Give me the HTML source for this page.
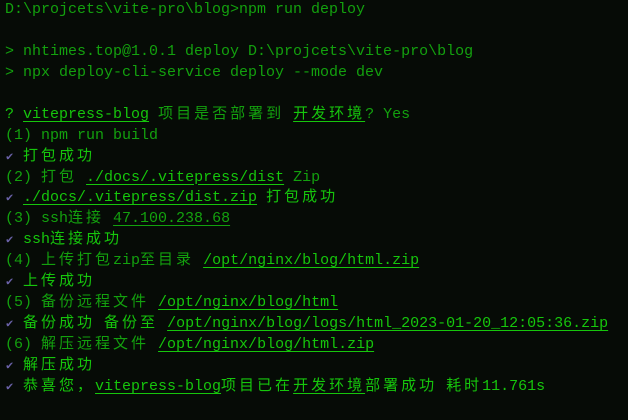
<!DOCTYPE html>
<html><head><meta charset="utf-8"><style>
html,body{margin:0;padding:0;background:#060b06;width:628px;height:420px;overflow:hidden}
.t{position:absolute;left:5px;top:0px;font-family:"Liberation Mono","Noto Sans CJK SC",monospace;font-size:15px;color:#13a10e}
.l{height:20.95px;line-height:20.95px;white-space:pre}
.b{color:#16c60c}
u{text-decoration:underline;text-underline-offset:3px}
.c{letter-spacing:3px}
.k{color:#6a62a8;font-size:12px;display:inline-block;width:18px;padding-left:1px;box-sizing:border-box}
</style></head><body><div class="t"><div class="l">D:\projcets\vite-pro\blog&gt;npm run deploy</div><div class="l"> </div><div class="l">&gt; nhtimes.top@1.0.1 deploy D:\projcets\vite-pro\blog</div><div class="l">&gt; npx deploy-cli-service deploy --mode dev</div><div class="l"> </div><div class="l"><span class="b">? <u>vitepress-blog</u></span> <span class="c">项目是否部署到</span> <u class="b c">开发环境</u>? Yes</div><div class="l">(1) npm run build</div><div class="l"><span class="k">✔</span><span class="b c">打包成功</span></div><div class="l">(2) <span class="c">打包</span> <u class="b">./docs/.vitepress/dist</u> Zip</div><div class="l"><span class="k">✔</span><span class="b"><u>./docs/.vitepress/dist.zip</u> <span class="c">打包成功</span></span></div><div class="l">(3) ssh<span class="c">连接</span> <u>47.100.238.68</u></div><div class="l"><span class="k">✔</span><span class="b">ssh<span class="c">连接成功</span></span></div><div class="l">(4) <span class="c">上传打包</span>zip<span class="c">至目录</span> <u class="b">/opt/nginx/blog/html.zip</u></div><div class="l"><span class="k">✔</span><span class="b c">上传成功</span></div><div class="l">(5) <span class="c">备份远程文件</span> <u class="b">/opt/nginx/blog/html</u></div><div class="l"><span class="k">✔</span><span class="b"><span class="c">备份成功</span> <span class="c">备份至</span> <u>/opt/nginx/blog/logs/html_2023-01-20_12:05:36.zip</u></span></div><div class="l">(6) <span class="c">解压远程文件</span> <u class="b">/opt/nginx/blog/html.zip</u></div><div class="l"><span class="k">✔</span><span class="b c">解压成功</span></div><div class="l"><span class="k">✔</span><span class="b"><span class="c">恭喜您，</span><u>vitepress-blog</u><span class="c">项目已在</span><u class="c">开发环境</u><span class="c">部署成功</span> <span class="c">耗时</span>11.761s</span></div></div></body></html>
